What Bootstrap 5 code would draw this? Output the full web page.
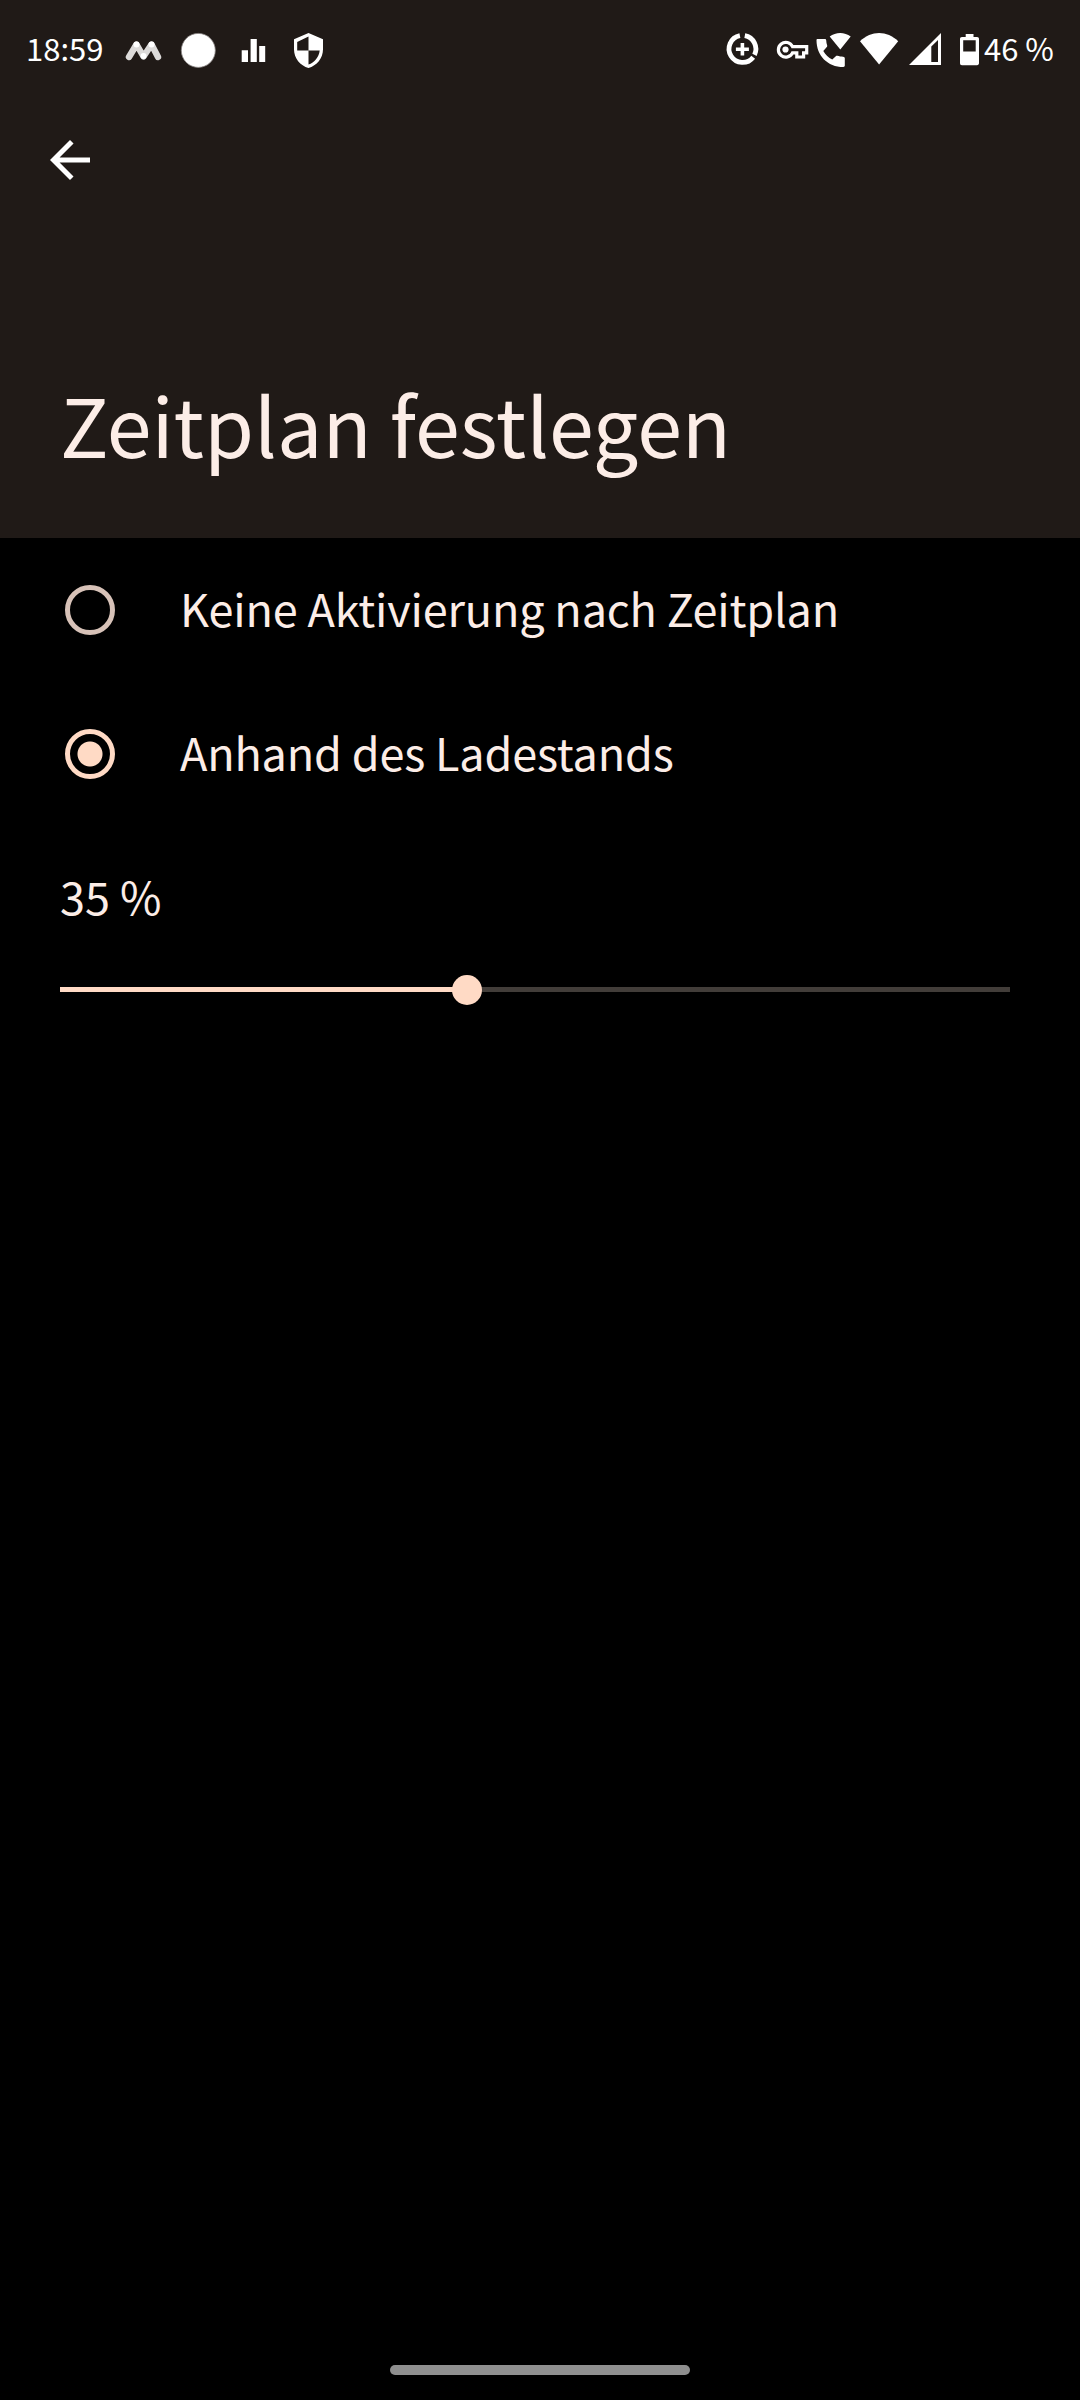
<!DOCTYPE html>
<html lang="de">
<head>
<meta charset="utf-8">
<meta name="viewport" content="width=device-width, initial-scale=1">
<title>Zeitplan festlegen</title>
<link href="https://cdn.jsdelivr.net/npm/bootstrap@5.3.0/dist/css/bootstrap.min.css" rel="stylesheet">
<style>
body { background: #000; color: #fcede7; font-family: "Noto Sans CJK SC", "Noto Sans", sans-serif; }
svg { display: block; flex: none; }
.screen { height: 2400px; overflow: hidden; }
.app-head { background: #201a17; height: 538px; }
.status { height: 100px; color: #fff; fill: #fff; font-size: 31px; line-height: 95px; padding: 0 26px; }
.status span { white-space: nowrap; flex: none; }
.clock { width: 98px; }
.charge { width: 71px; padding-left: 1px; }
.toolbar { height: 120px; padding: 0 40px; fill: #fff; }
.title { font-size: 80.7px; line-height: 120px; padding: 143px 0 0 60px; font-weight: 400; white-space: nowrap; }
.option { height: 144px; padding: 0 65px; gap: 65px; font-size: 45px; letter-spacing: -.17px; line-height: 60px; }
.option .form-check-input { width: 50px; height: 50px; border: 5px solid #d7c2b8; background: #000; margin: 0; flex: none; box-shadow: none; }
.option .form-check-input:checked { border-color: #ffdac5; background: radial-gradient(circle, #ffdac5 12px, #000 13px); }
.option label { white-space: nowrap; padding-bottom: 5px; }
.level { font-size: 45px; line-height: 60px; padding: 40px 60px 0; height: 141px; }
.slider { margin: 20px 70px 0 60px; }
.slider .progress { height: 5px; background: #423d39; border-radius: 0; }
.slider .progress-bar { background: #ffdac5; }
.thumb { width: 30px; height: 30px; background: #ffdac5; }
.home-pill { width: 300px; height: 10px; background: #8f8f8f; margin-bottom: 25px; }
</style>
</head>
<body>
<div class="screen d-flex flex-column">
  <header class="app-head">
    <div class="status d-flex align-items-start">
      <span class="clock">18:59</span>
      <svg width="40" height="100" viewBox="124 0 40 100"><g fill="none" stroke="#dcdad9" stroke-width="6.4" stroke-linecap="round" stroke-linejoin="round"><path d="M129 57l7.500-12.500 7 12 8-12 6.500 12.500"/></g><g fill="#fff"><circle cx="136.500" cy="44.500" r="3"/><circle cx="143.500" cy="56" r="3"/><circle cx="151.500" cy="44.500" r="3"/></g></svg>
      <svg width="70" height="100" viewBox="164 0 70 100"><circle cx="198.300" cy="50.400" r="17" stroke="#8b8785" stroke-width=".8"/></svg>
      <svg width="46" height="100" viewBox="234 0 46 100"><path d="M241.700 50.300h6.300V62h-6.300zM250.600 39h6.200v23h-6.200zM259.200 46h6v16h-6z"/></svg>
      <svg width="50" height="100" viewBox="280 0 50 100"><path fill-rule="evenodd" d="M308.500 33l14.500 6.300v10c0 9-6.200 16.500-14.500 18.700-8.300-2.200-14.500-9.700-14.500-18.700v-10zM308.500 36.500v14h-11.300v-8.600zM308.500 50.500h11.200c-.8 6.500-5.200 12.200-11.200 14.100z"/></svg>
      <svg class="ms-auto" width="42" height="100" viewBox="723 0 42 100"><path fill="none" stroke="#fff" stroke-width="4.800" d="M744.800 35.700a13.500 13.500 0 0 1 9.700 19.200M753.200 57.200A13.500 13.500 0 1 1 739.900 35.700"/><path d="M740.600 43h3.600v4.500h4.700v3.600h-4.700v4.500h-3.600v-4.500h-4.700v-3.600h4.700z"/></svg>
      <svg width="47" height="100" viewBox="765 0 47 100"><path fill="none" stroke="#fff" stroke-width="3.200" stroke-linejoin="miter" d="M792.500 46.600H806.700V52.800H803.600V57H796.800V52.800H792.500A7.400 7.400 0 1 1 792.500 46.600Z"/><circle cx="785.500" cy="49.500" r="3.100"/></svg>
      <svg width="43" height="100" viewBox="812 0 43 100"><path d="M817.500 39h7.300c.8 0 1.300.5 1.400 1.300.1 1.900.4 3.700 1 5.300.2.600 0 1.100-.4 1.500l-3.500 3.800c2.300 4 5.100 6.700 9 8.500l3.500-3.200c.5-.4 1-.5 1.500-.4 2 .5 3.500.9 5.800 1 1.100.1 1.700.6 1.700 1.500v7.300c0 .9-.5 1.400-1.400 1.400C827.500 67 816.500 55.500 816.500 40.200c0-.8.300-1.200 1-1.200zM829.700 36.600c6-4.700 15-4.700 21 0L840.300 49.500z"/></svg>
      <svg width="49" height="100" viewBox="855 0 49 100"><path d="M860 41.200c11.200-11 27-11 38.200 0L879.100 64.500z"/></svg>
      <svg width="44" height="100" viewBox="904 0 44 100"><path fill-rule="evenodd" d="M909 65l32-32v32zM931.300 46.500v15.600h6.700V40.100z"/></svg>
      <svg width="35" height="100" viewBox="948 0 35 100"><path fill-rule="evenodd" d="M965.700 34h7.800v3h3.500c1.300 0 2 .8 2 2v24c0 1.400-.7 2.200-2 2.200h-15c-1.300 0-2-.8-2-2.200V39c0-1.200.7-2 2-2h3.700zM963.200 40.300v11.200h12.500V40.300z"/></svg>
      <span class="charge">46 %</span>
    </div>
    <div class="toolbar d-flex align-items-center">
      <svg width="60" height="60" viewBox="0 0 24 24"><path d="M20 11H7.830l5.590-5.590L12 4l-8 8 8 8 1.410-1.410L7.830 13H20v-2z"/></svg>
    </div>
    <h1 class="title mb-0">Zeitplan festlegen</h1>
  </header>
  <main class="flex-grow-1">
    <div class="option d-flex align-items-center">
      <input class="form-check-input" type="radio" name="plan" id="plan-none">
      <label for="plan-none">Keine Aktivierung nach Zeitplan</label>
    </div>
    <div class="option d-flex align-items-center">
      <input class="form-check-input" type="radio" name="plan" id="plan-level" checked>
      <label for="plan-level">Anhand des Ladestands</label>
    </div>
    <div class="level">35 %</div>
    <div class="slider position-relative">
      <div class="progress"><div class="progress-bar" style="width:42.860%"></div></div>
      <div class="thumb rounded-circle position-absolute top-50 translate-middle" style="left:42.860%"></div>
    </div>
  </main>
  <div class="home-pill rounded-pill mx-auto"></div>
</div>
<script src="https://cdn.jsdelivr.net/npm/bootstrap@5.3.0/dist/js/bootstrap.bundle.min.js"></script>
</body>
</html>
